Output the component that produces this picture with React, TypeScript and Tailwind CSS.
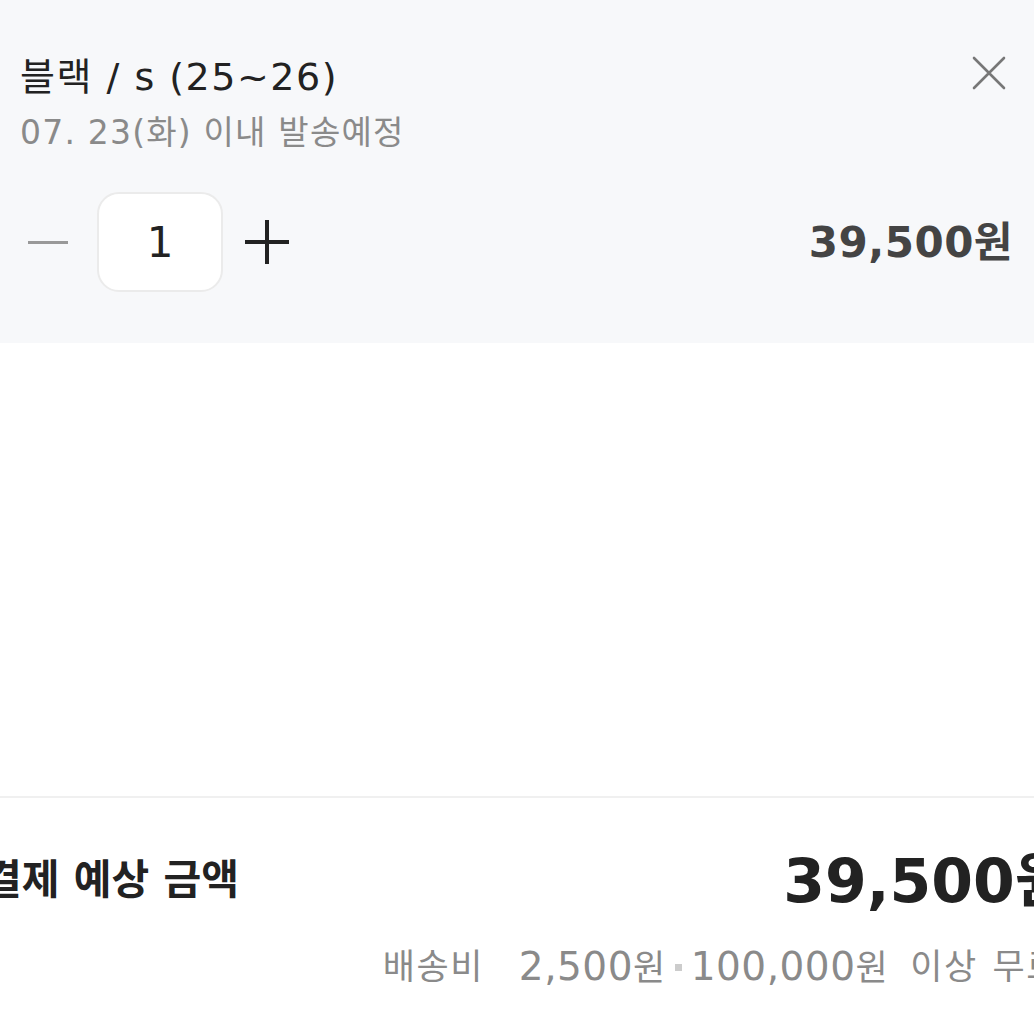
const font = "font-['DejaVu_Sans','Noto_Sans_CJK_KR',sans-serif]";

function CloseIcon() {
  return (
    <svg width="34" height="34" viewBox="0 0 34 34" fill="none" stroke="#777" strokeWidth="2.6" strokeLinecap="round">
      <path d="M2 2L32 32M32 2L2 32" />
    </svg>
  );
}

export default function App() {
  return (
    <div className={`w-[1034px] h-[1034px] bg-white overflow-hidden flex flex-col ${font}`}>
      {/* Selected option panel */}
      <section className="h-[343px] shrink-0 bg-[#f7f8fa] px-5 pt-[50px] relative">
        <button className="absolute top-[56px] right-[28px]">
          <CloseIcon />
        </button>
        <h2 className="text-[38px] leading-[54px] tracking-[1.5px] text-[#222]">블랙 / s (25~26)</h2>
        <p className="text-[33px] leading-[46px] tracking-[1.2px] text-[#8a8a8a] mt-[6px]">07. 23(화) 이내 발송예정</p>
        <div className="flex items-center mt-[36px]">
          <span className="w-[40px] h-[3px] bg-[#999] ml-[8px]" />
          <div className="w-[126px] h-[100px] ml-[29px] rounded-[22px] bg-white border-2 border-[#ebebeb] flex items-center justify-center text-[42px] text-[#222]">
            1
          </div>
          <span className="ml-[22px] relative w-[44px] h-[44px]">
            <span className="absolute left-0 top-[20px] w-[44px] h-[4px] bg-[#222]" />
            <span className="absolute top-0 left-[20px] h-[44px] w-[4px] bg-[#222]" />
          </span>
          <span className="ml-auto text-[42px] font-bold tracking-[0.5px] text-[#444] mr-[1px]">39,500원</span>
        </div>
      </section>

      <div className="h-[455px] shrink-0 border-b-2 border-[#f0f0f0]" />

      {/* Total */}
      <section className="flex-1 overflow-hidden">
        <div className="ml-[-36px] mr-[-36px] flex flex-col">
          <div className="flex items-center justify-between mt-[38px]">
            <span className="ml-[20px] text-[41px] font-bold text-[#222]">결제 예상 금액</span>
            <span className="text-[60px] font-bold text-[#222]">39,500원</span>
          </div>
          <p className="self-end mt-[12px] mr-[10px] text-[35px] text-[#8a8a8a] flex items-center tracking-[1.5px]">
            <span>배송비</span>
            <span className="ml-[35px] text-[39px] tracking-[0.5px]">2,500<span className="text-[35px]">원</span></span>
            <span className="mx-[9px] w-[7px] h-[7px] bg-[#ccc]" />
            <span className="text-[39px] tracking-[0.5px]">100,000<span className="text-[35px]">원</span></span>
            <span className="ml-[22px]">이상</span>
            <span className="ml-[15px]">무료</span>
          </p>
        </div>
      </section>
    </div>
  );
}
